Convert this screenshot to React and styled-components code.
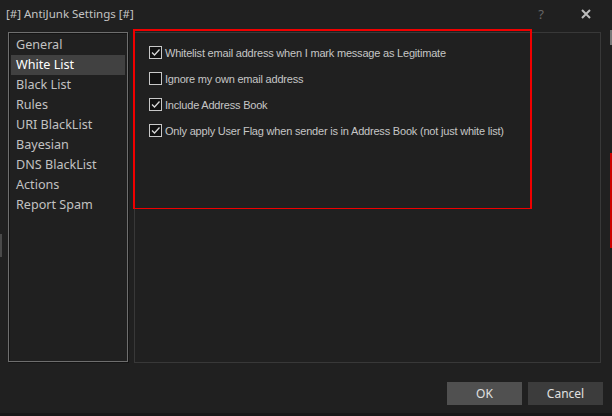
import React from "react";
import styled, { createGlobalStyle } from "styled-components";

const Global = createGlobalStyle`
  html, body { margin: 0; padding: 0; background: #202020; }
  * { box-sizing: border-box; }
`;

const Window = styled.div`
  width: 612px;
  height: 416px;
  background: #202020;
  position: relative;
  overflow: hidden;
  font-family: "Noto Sans", "Open Sans", sans-serif;
  color: #c8c8c8;
  display: flex;
  flex-direction: column;
`;

const TitleBar = styled.div`
  height: 29px;
  display: flex;
  align-items: center;
  padding: 0 16px 2px 6px;
`;

const Title = styled.div`
  font-size: 11.5px;
  color: #c4c4c4;
  flex: 1;
`;

const HelpButton = styled.div`
  width: 20px;
  margin-right: 25px;
  text-align: center;
  font-size: 13px;
  color: #666666;
`;

const CloseButton = styled.div`
  width: 20px;
  height: 20px;
  display: flex;
  align-items: center;
  justify-content: center;
`;

const Body = styled.div`
  display: flex;
  padding: 3px 11px 0 8px;
  gap: 6px;
`;

const ListBox = styled.div`
  width: 120px;
  height: 330px;
  border: 1px solid #6e6e6e;
  box-shadow: 1px 1px 0 #141414, inset 1px 1px 0 #141414;
  padding: 2px 2px;
  display: flex;
  flex-direction: column;
`;

const ListItem = styled.div`
  height: 20px;
  line-height: 20px;
  padding-left: 5px;
  font-size: 12.6px;
  color: ${(p) => (p.selected ? "#ffffff" : "#c2c2c2")};
  background: ${(p) => (p.selected ? "#414141" : "transparent")};
`;

const Panel = styled.div`
  position: relative;
  width: 467px;
  height: 331px;
  border: 1px solid #383838;
`;

const GroupBox = styled.div`
  position: relative;
  z-index: 1;
  margin: -4px 0 0 -2px;
  width: 399px;
  height: 180px;
  border-style: solid;
  border-color: #f00000;
  border-width: 2px 2px 1px 2px;
  padding: 15px 0 0 14px;
  display: flex;
  flex-direction: column;
  gap: 13px;
`;

const CheckRow = styled.label`
  display: flex;
  align-items: center;
  gap: 3px;
  height: 13px;
  font-family: "Liberation Sans", Arial, sans-serif;
  font-size: 11px;
  color: #c6c6c6;
  letter-spacing: -0.2px;
`;

const Box = styled.span`
  width: 13px;
  height: 13px;
  border: 1px solid #c8c8c8;
  background: #111111;
  display: flex;
  align-items: center;
  justify-content: center;
  flex: none;
`;

const Footer = styled.div`
  display: flex;
  justify-content: flex-end;
  gap: 6px;
  padding: 19px 9px 0 0;
`;

const Button = styled.div`
  width: 75px;
  height: 23px;
  display: flex;
  align-items: center;
  justify-content: center;
  font-size: 12px;
  color: #e0e0e0;
  background: ${(p) => (p.primary ? "#505050" : "#3c3c3c")};
`;

const EdgeMark = styled.div`
  position: absolute;
  left: ${(p) => p.x}px;
  top: ${(p) => p.y}px;
  width: ${(p) => p.w}px;
  height: ${(p) => p.h}px;
  background: ${(p) => p.c};
`;

const BottomStrip = styled.div`
  position: absolute;
  left: 0;
  right: 0;
  bottom: 0;
  height: 3px;
  background: #181818;
`;

function Check({ checked }) {
  return (
    <Box>
      {checked && (
        <svg width="11" height="11" viewBox="0 0 11 11">
          <path d="M2 5.5 L4.5 8 L9.5 2.5" fill="none" stroke="#d8d8d8" strokeWidth="1.3" />
        </svg>
      )}
    </Box>
  );
}

const items = ["General", "White List", "Black List", "Rules", "URI BlackList", "Bayesian", "DNS BlackList", "Actions", "Report Spam"];

const options = [
  ["Whitelist email address when I mark message as Legitimate", true],
  ["Ignore my own email address", false],
  ["Include Address Book", true],
  ["Only apply User Flag when sender is in Address Book (not just white list)", true],
];

export default function App() {
  return (
    <Window>
      <Global />
      <TitleBar>
        <Title>[#] AntiJunk Settings [#]</Title>
        <HelpButton>?</HelpButton>
        <CloseButton>
          <svg width="10" height="10" viewBox="0 0 10 10">
            <path d="M1 1 L9 9 M9 1 L1 9" stroke="#bdbdbd" strokeWidth="2" />
          </svg>
        </CloseButton>
      </TitleBar>
      <Body>
        <ListBox>
          {items.map((t) => (
            <ListItem key={t} selected={t === "White List"}>{t}</ListItem>
          ))}
        </ListBox>
        <Panel>
          <GroupBox>
            {options.map(([t, c]) => (
              <CheckRow key={t}>
                <Check checked={c} />
                {t}
              </CheckRow>
            ))}
          </GroupBox>
        </Panel>
      </Body>
      <Footer>
        <Button primary>OK</Button>
        <Button>Cancel</Button>
      </Footer>
      <EdgeMark x={610} y={153} w={2} h={95} c="#cc0000" />
      <EdgeMark x={0} y={234} w={2} h={23} c="#4a4a4a" />
      <EdgeMark x={610} y={30} w={2} h={15} c="#777777" />
      <BottomStrip />
    </Window>
  );
}
